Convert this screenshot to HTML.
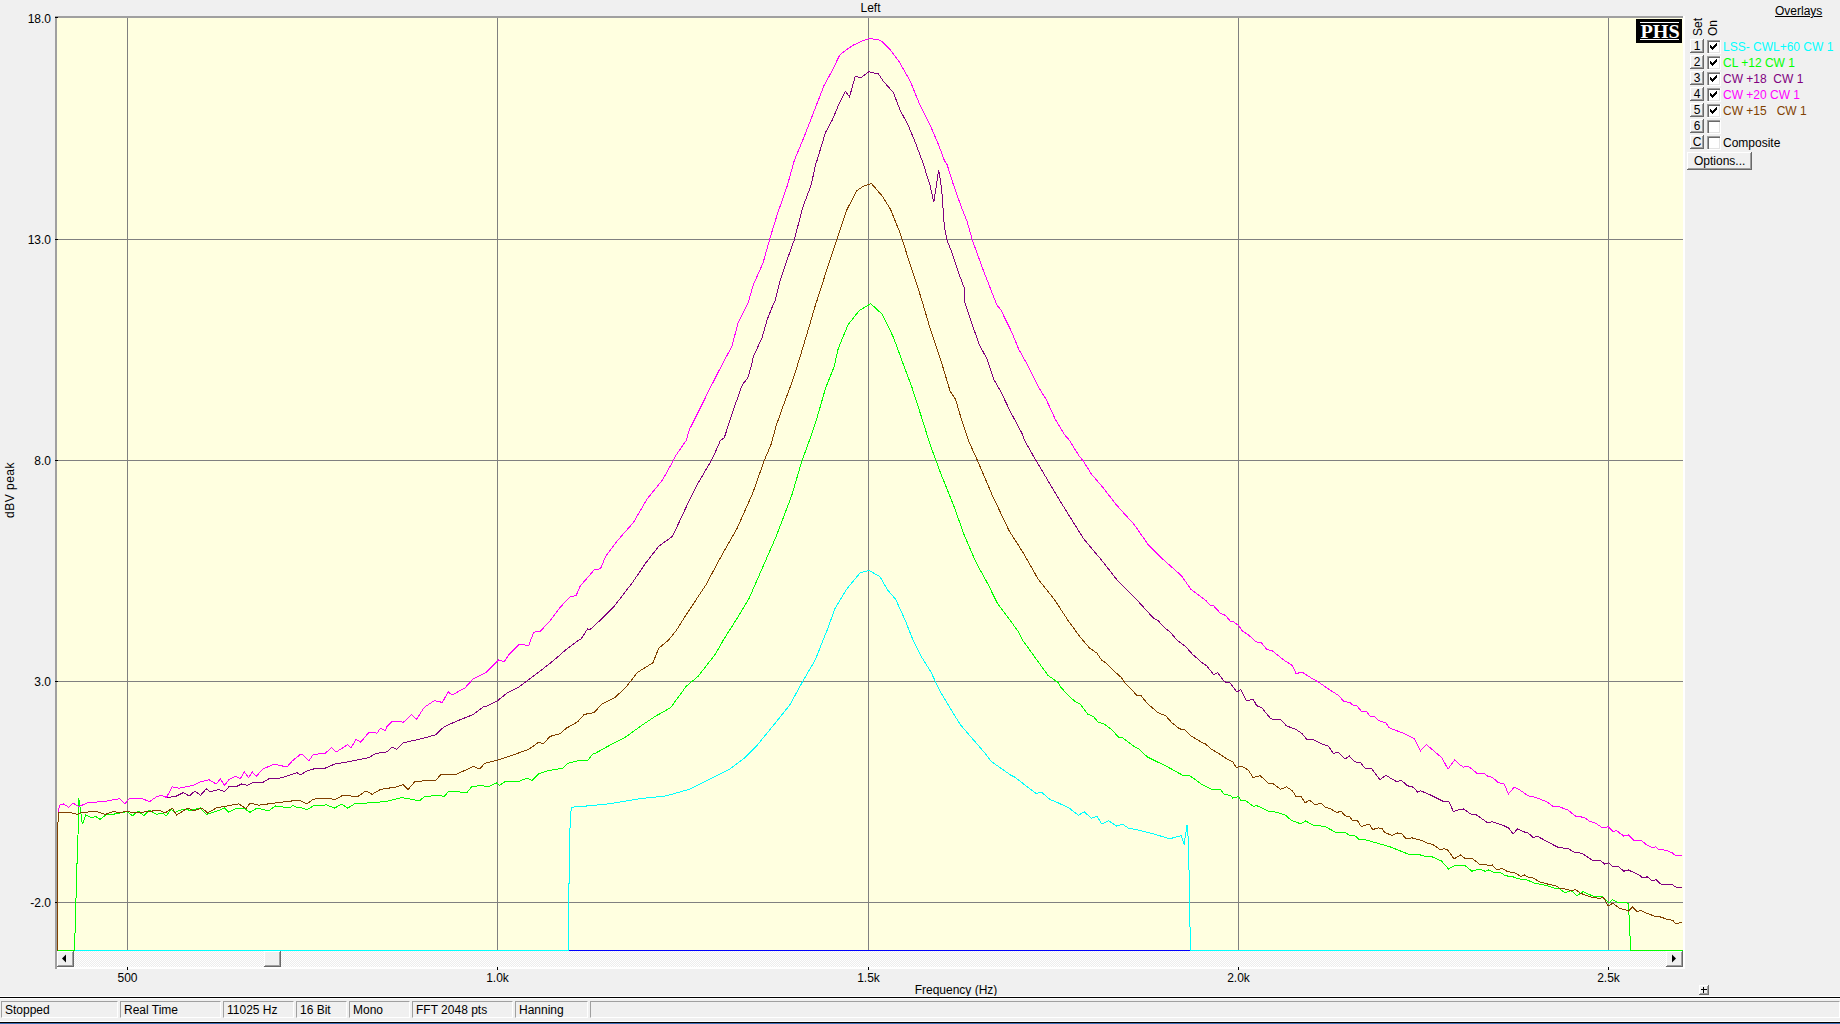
<!DOCTYPE html>
<html><head><meta charset="utf-8"><title>Spectrum</title><style>
html,body{margin:0;padding:0;}
body{width:1840px;height:1024px;background:#F0F0F0;position:relative;overflow:hidden;font-family:"Liberation Sans",sans-serif;font-size:12px;color:#000;}
.t{position:absolute;line-height:14px;white-space:pre;}
.r{position:absolute;}
</style></head><body>
<div class="t" style="left:770.5px;width:200px;top:1px;color:#000;text-align:center;">Left</div>
<div class="t" style="left:-20px;top:483px;width:60px;text-align:center;transform:rotate(-90deg);letter-spacing:0.5px;">dBV peak</div>
<div class="r" style="left:55px;top:16px;width:1630px;height:953px;background:#FFFFFF;"></div>
<div class="r" style="left:55px;top:16px;width:1628px;height:2px;background:#A0A0A0;"></div>
<div class="r" style="left:55px;top:16px;width:2px;height:953px;background:#A0A0A0;"></div>
<div class="r" style="left:57px;top:18px;width:1626px;height:933px;background:#FFFFE0;"></div>
<div class="r" style="left:57px;top:951px;width:1626px;height:16px;background:#F7F7F7;background-image:repeating-conic-gradient(#EDEDED 0 25%,#FFFFFF 0 50%);background-size:2px 2px;"></div>
<div class="r" style="left:57px;top:951px;width:17px;height:16px;background:#696969;"></div><div class="r" style="left:57px;top:951px;width:16px;height:15px;background:#FFFFFF;"></div><div class="r" style="left:58px;top:952px;width:15px;height:14px;background:#A0A0A0;"></div><div class="r" style="left:58px;top:952px;width:14px;height:13px;background:#F0F0F0;"></div>
<svg class="r" style="left:57px;top:951px;" width="17" height="16"><path d="M5 7.5 L9 3.5 L9 11.5 Z" fill="#000"/></svg>
<div class="r" style="left:1666px;top:951px;width:17px;height:16px;background:#696969;"></div><div class="r" style="left:1666px;top:951px;width:16px;height:15px;background:#FFFFFF;"></div><div class="r" style="left:1667px;top:952px;width:15px;height:14px;background:#A0A0A0;"></div><div class="r" style="left:1667px;top:952px;width:14px;height:13px;background:#F0F0F0;"></div>
<svg class="r" style="left:1666px;top:951px;" width="17" height="16"><path d="M10 7.5 L6 3.5 L6 11.5 Z" fill="#000"/></svg>
<div class="r" style="left:264px;top:951px;width:17px;height:16px;background:#696969;"></div><div class="r" style="left:264px;top:951px;width:16px;height:15px;background:#FFFFFF;"></div><div class="r" style="left:265px;top:952px;width:15px;height:14px;background:#A0A0A0;"></div><div class="r" style="left:265px;top:952px;width:14px;height:13px;background:#F0F0F0;"></div>
<svg class="r" style="left:0;top:0;" width="1840" height="1024" shape-rendering="crispEdges">
<rect x="127" y="18" width="1" height="933" fill="#808080"/>
<rect x="127" y="967" width="1" height="3" fill="#000"/>
<rect x="497" y="18" width="1" height="933" fill="#808080"/>
<rect x="497" y="967" width="1" height="3" fill="#000"/>
<rect x="868" y="18" width="1" height="933" fill="#808080"/>
<rect x="868" y="967" width="1" height="3" fill="#000"/>
<rect x="1238" y="18" width="1" height="933" fill="#808080"/>
<rect x="1238" y="967" width="1" height="3" fill="#000"/>
<rect x="1608" y="18" width="1" height="933" fill="#808080"/>
<rect x="1608" y="967" width="1" height="3" fill="#000"/>
<rect x="57" y="239" width="1626" height="1" fill="#808080"/>
<rect x="57" y="460" width="1626" height="1" fill="#808080"/>
<rect x="57" y="681" width="1626" height="1" fill="#808080"/>
<rect x="57" y="902" width="1626" height="1" fill="#808080"/>
<rect x="55" y="17" width="3" height="1" fill="#000"/>
<rect x="55" y="239" width="3" height="1" fill="#000"/>
<rect x="55" y="460" width="3" height="1" fill="#000"/>
<rect x="55" y="681" width="3" height="1" fill="#000"/>
<rect x="55" y="902" width="3" height="1" fill="#000"/>
</svg>
<svg class="r" style="left:0;top:0;" width="1840" height="1024">
<defs><clipPath id="pc"><rect x="57" y="18" width="1626" height="933"/></clipPath></defs>
<g clip-path="url(#pc)" fill="none" stroke-width="1" stroke-linejoin="miter" shape-rendering="crispEdges">
<path d="M57 950.5 L1683 950.5" stroke="#0000FF"/>
<path d="M57.5 950.5 L568.3 950.5 L569.5 837.5 L571.2 807.3 L577.7 806.5 L580.5 806.6 L609.8 803.7 L639.2 798.8 L666.6 795.8 L690.1 789.0 L713.5 777.2 L729.2 769.4 L744.9 757.7 L756.6 745.9 L774.2 724.4 L789.9 704.8 L801.6 683.3 L815.3 659.8 L823.1 640.1 L827.0 630.5 L834.9 608.8 L846.6 589.2 L860.3 572.6 L869.1 570.6 L879.9 576.5 L887.7 590.2 L895.5 599.0 L905.3 620.5 L909.2 630.5 L913.1 640.1 L920.9 655.9 L930.7 671.6 L940.5 692.1 L960.1 724.4 L985.5 753.8 L991.4 761.6 L1010.9 775.2 L1014.8 777.2 L1036.4 793.8 L1038.3 792.9 L1042.2 792.8 L1050.1 799.6 L1057.9 802.7 L1069.6 808.4 L1078.4 815.3 L1084.3 811.8 L1091.2 818.2 L1097.0 816.3 L1101.9 824.1 L1108.8 820.8 L1116.6 826.0 L1122.5 824.1 L1128.3 828.0 L1138.1 830.1 L1155.7 834.5 L1169.4 838.8 L1181.2 835.8 L1184.1 844.6 L1187.0 825.1 L1188.8 844.6 L1189.1 879.8 L1190.0 926.8 L1190.9 950.5 L1683.0 950.5" stroke="#00FFFF"/>
<path d="M57.5 950.5 L74.5 950.5 L77.1 860.5 L78.0 835.5 L78.7 798.1 L80.2 808.0 L82.3 824.3 L85.8 815.1 L91.5 817.9 L95.7 816.5 L100.0 819.4 L105.6 815.1 L117.0 813.7 L126.9 811.6 L132.5 815.8 L138.2 810.9 L143.9 815.8 L149.5 810.2 L156.6 814.4 L162.3 813.0 L166.5 815.8 L170.8 809.4 L175.0 812.3 L182.1 809.4 L190.6 810.2 L200.5 808.0 L206.2 814.4 L217.5 810.9 L224.6 808.0 L228.8 812.3 L235.9 808.7 L244.4 808.7 L250.1 812.3 L257.2 808.0 L268.5 810.9 L275.6 805.9 L289.7 808.0 L292.6 805.2 L296.8 807.3 L300.5 807.3 L307.0 809.7 L313.5 805.7 L326.6 804.9 L334.7 808.1 L341.3 804.0 L347.8 808.1 L354.3 804.0 L385.3 801.6 L401.6 797.5 L419.5 800.8 L424.4 796.7 L439.1 795.1 L444.0 796.7 L448.9 791.0 L466.8 792.6 L471.7 786.9 L481.5 785.3 L488.0 786.9 L496.2 782.8 L499.4 785.3 L505.9 781.2 L517.4 782.0 L527.1 778.0 L532.0 780.4 L538.6 773.9 L548.3 770.6 L563.0 768.2 L567.9 763.3 L577.7 760.8 L587.4 760.8 L592.4 754.3 L596.2 752.8 L613.8 743.0 L625.5 737.1 L643.1 724.4 L654.8 716.6 L670.5 707.8 L686.2 686.3 L697.9 676.5 L715.5 654.0 L723.3 640.1 L737.0 618.5 L748.8 599.0 L762.5 567.7 L776.2 536.4 L791.8 495.3 L801.6 462.0 L807.8 444.9 L809.4 440.5 L817.0 418.0 L825.5 388.3 L834.0 367.1 L838.2 348.6 L848.1 324.6 L859.4 310.4 L870.8 303.6 L876.4 309.0 L882.1 314.0 L893.4 337.3 L903.3 364.2 L911.8 386.9 L921.8 418.0 L930.2 444.9 L940.5 472.8 L954.2 507.0 L964.0 534.4 L975.7 561.8 L987.5 583.3 L997.2 602.9 L1018.8 632.2 L1022.7 640.3 L1048.1 675.5 L1057.9 682.3 L1060.5 686.8 L1066.6 693.6 L1071.2 698.2 L1075.7 702.0 L1080.3 704.3 L1087.9 714.2 L1093.3 716.5 L1098.6 722.6 L1103.2 723.3 L1112.3 730.2 L1118.4 737.0 L1123.0 738.1 L1133.6 746.2 L1138.2 748.5 L1147.3 756.9 L1158.0 762.2 L1168.7 767.5 L1182.4 775.1 L1190.0 775.9 L1196.5 780.5 L1200.5 783.6 L1212.5 789.8 L1220.8 789.8 L1224.4 794.6 L1230.4 795.2 L1232.8 798.2 L1238.8 796.4 L1241.2 800.8 L1245.9 800.8 L1253.1 806.3 L1256.7 805.6 L1268.6 811.1 L1277.0 812.3 L1285.4 815.2 L1291.4 820.3 L1300.9 823.9 L1305.7 820.9 L1312.9 825.1 L1318.9 825.5 L1326.0 827.1 L1336.8 832.9 L1345.2 832.3 L1348.8 835.0 L1354.7 835.5 L1359.5 839.8 L1365.5 839.8 L1390.5 847.0 L1407.9 854.0 L1420.5 855.0 L1426.5 856.6 L1432.5 857.0 L1441.4 861.0 L1448.6 869.0 L1455.2 865.2 L1464.7 865.2 L1471.9 871.2 L1479.1 869.0 L1485.1 871.2 L1488.6 870.0 L1494.6 872.9 L1500.0 872.1 L1505.4 875.9 L1511.4 876.2 L1518.5 878.9 L1526.9 879.8 L1534.1 883.1 L1546.0 885.3 L1554.4 888.1 L1559.2 888.5 L1565.2 892.9 L1571.1 890.5 L1577.1 895.7 L1583.1 891.7 L1592.7 896.0 L1602.2 896.9 L1608.8 902.8 L1612.4 899.8 L1617.8 902.2 L1626.1 902.2 L1628.5 904.0 L1630.7 950.5 L1683.0 950.5" stroke="#00FF00"/>
<path d="M58.9 812.3 L59.1 805.2 L63.2 803.8 L68.8 807.3 L73.1 803.1 L78.7 806.6 L88.7 802.4 L104.2 801.7 L114.1 799.5 L119.8 798.8 L124.8 803.8 L129.7 798.1 L142.5 798.8 L149.5 801.7 L156.6 796.7 L160.9 795.3 L166.5 797.4 L175.0 796.7 L183.5 792.5 L189.2 796.0 L194.9 791.0 L200.5 795.3 L206.2 788.9 L210.4 791.7 L218.9 789.6 L224.6 791.7 L228.8 786.8 L235.9 786.8 L241.6 784.0 L247.2 785.4 L252.9 782.5 L262.8 782.5 L268.5 779.0 L278.4 778.3 L286.9 776.2 L296.8 772.6 L300.5 774.7 L306.7 771.2 L313.5 769.0 L325.0 768.2 L334.7 764.1 L349.4 761.6 L369.0 757.6 L375.5 753.5 L386.9 751.9 L391.8 747.0 L396.7 749.4 L403.2 742.9 L424.4 738.0 L435.8 734.7 L444.0 726.8 L457.0 721.0 L473.3 714.5 L483.1 707.0 L486.4 706.4 L498.2 700.2 L507.6 692.6 L519.0 686.9 L528.8 679.5 L538.6 672.2 L553.2 660.8 L566.3 649.4 L579.3 639.6 L580.5 639.8 L587.5 629.0 L590.3 629.3 L600.5 620.0 L613.8 606.8 L633.3 581.4 L645.1 563.8 L658.8 546.2 L672.5 536.4 L686.2 507.0 L697.9 483.5 L711.6 460.1 L713.6 455.9 L720.4 440.5 L724.3 437.6 L734.9 405.6 L740.5 389.7 L742.5 384.3 L747.6 378.4 L751.7 364.5 L753.2 357.1 L760.5 340.9 L761.7 338.7 L767.4 318.9 L773.1 304.9 L775.2 300.5 L780.1 280.9 L787.2 259.6 L794.3 239.8 L802.8 207.2 L811.3 184.6 L815.5 164.9 L817.0 160.5 L825.5 132.4 L832.5 119.6 L839.6 102.6 L845.3 91.3 L849.5 97.0 L855.2 76.4 L860.9 77.8 L868.7 71.8 L878.5 74.0 L883.5 81.4 L893.4 92.7 L900.5 111.1 L907.6 123.9 L914.7 140.9 L922.9 162.7 L930.2 186.0 L933.8 202.3 L938.7 169.7 L941.6 188.8 L944.4 227.1 L947.2 241.2 L951.5 251.1 L960.0 276.6 L964.2 287.9 L964.2 300.5 L965.7 304.9 L972.7 326.0 L979.8 345.8 L986.9 358.6 L994.0 379.8 L1000.5 391.1 L1011.2 413.2 L1022.6 434.6 L1024.6 440.5 L1033.3 455.9 L1036.4 461.0 L1052.0 487.5 L1063.8 507.0 L1083.3 538.3 L1102.9 561.8 L1116.6 579.4 L1134.2 597.0 L1153.8 618.5 L1158.0 620.5 L1164.1 627.4 L1170.2 631.9 L1176.3 639.5 L1185.4 646.4 L1193.0 654.8 L1198.5 659.5 L1200.5 661.5 L1206.5 665.7 L1213.7 674.6 L1217.8 672.8 L1224.4 681.8 L1229.8 682.8 L1237.0 692.0 L1240.6 689.6 L1246.5 700.9 L1253.1 699.1 L1256.7 705.7 L1261.5 707.5 L1271.0 718.9 L1280.6 719.8 L1286.6 725.9 L1296.1 729.5 L1302.1 733.7 L1306.9 739.6 L1314.1 739.9 L1321.3 743.8 L1328.4 746.2 L1333.2 753.4 L1338.0 752.2 L1345.2 759.0 L1349.4 756.1 L1354.7 761.7 L1360.7 762.9 L1365.5 768.9 L1371.5 768.3 L1379.8 779.7 L1385.8 775.3 L1396.6 781.7 L1401.4 780.3 L1407.3 785.7 L1413.3 787.2 L1417.5 792.0 L1420.5 790.7 L1430.1 794.8 L1436.0 797.8 L1444.4 802.0 L1448.6 801.1 L1453.4 811.6 L1458.8 809.8 L1463.5 809.0 L1470.7 814.0 L1475.5 814.2 L1487.5 822.6 L1492.2 821.7 L1504.2 825.9 L1509.0 828.3 L1513.2 834.1 L1517.3 828.9 L1523.3 831.7 L1528.1 832.9 L1533.5 837.9 L1537.1 836.1 L1553.2 844.8 L1558.0 847.2 L1568.8 849.0 L1574.7 852.6 L1581.9 853.2 L1592.7 860.4 L1599.8 860.2 L1604.6 864.0 L1608.8 862.8 L1613.0 867.0 L1617.8 866.1 L1623.8 871.2 L1628.5 870.0 L1635.7 873.5 L1640.5 875.9 L1642.0 877.6 L1647.3 876.9 L1652.2 880.8 L1655.9 879.6 L1661.8 884.9 L1673.1 884.9 L1675.3 886.9 L1681.7 887.9" stroke="#800080"/>
<path d="M58.9 812.3 L59.1 805.2 L63.2 803.8 L68.8 807.3 L73.1 803.1 L78.7 806.6 L88.7 802.4 L104.2 801.7 L114.1 799.5 L119.8 798.8 L124.8 803.8 L129.7 798.1 L142.5 798.8 L149.5 801.7 L156.6 796.7 L160.9 795.3 L166.5 797.4 L172.2 786.8 L179.3 788.2 L193.4 785.4 L200.5 781.8 L209.0 779.7 L216.1 784.0 L220.3 779.0 L224.6 785.4 L228.8 779.7 L235.9 776.2 L240.2 779.0 L244.4 771.9 L248.7 777.6 L252.2 771.9 L256.4 776.2 L262.8 769.1 L274.2 764.1 L286.9 767.0 L292.6 760.6 L300.5 754.3 L302.5 754.2 L308.7 760.8 L313.5 754.3 L325.0 753.5 L331.5 747.8 L336.4 751.9 L347.8 744.5 L351.0 747.8 L355.9 739.6 L360.8 742.1 L369.0 732.3 L377.1 733.1 L380.4 728.2 L385.3 730.7 L386.9 726.8 L391.8 721.7 L401.6 721.9 L403.2 722.5 L411.4 714.6 L416.3 719.5 L424.4 707.2 L434.2 700.7 L442.4 702.4 L448.1 691.8 L452.1 695.0 L465.2 687.7 L473.3 678.7 L486.4 672.2 L498.6 660.0 L504.3 661.6 L509.2 654.3 L519.0 644.5 L528.8 645.3 L533.7 632.2 L540.2 631.4 L550.0 620.8 L559.8 607.8 L569.5 597.2 L576.1 595.6 L580.5 585.3 L582.6 583.3 L594.1 570.0 L600.5 568.7 L605.9 555.9 L617.7 540.3 L633.3 522.7 L647.0 499.2 L662.7 479.6 L672.5 462.0 L675.5 455.9 L686.2 440.5 L689.2 430.0 L698.4 411.7 L709.0 390.4 L718.2 372.1 L731.9 346.2 L738.0 323.4 L740.5 318.2 L748.5 301.6 L753.2 285.1 L763.2 262.5 L769.5 239.8 L777.3 214.3 L787.2 186.0 L792.9 165.5 L794.3 160.5 L804.2 136.6 L814.1 111.1 L824.0 85.6 L832.5 70.1 L839.6 55.2 L845.3 50.5 L853.8 44.9 L863.7 40.3 L869.4 38.6 L877.9 39.6 L882.1 41.7 L890.6 50.2 L899.1 61.6 L910.4 81.4 L918.9 102.6 L930.2 125.3 L938.7 145.1 L944.4 160.5 L947.2 164.9 L952.9 183.2 L961.4 207.2 L967.1 221.4 L972.7 241.2 L984.1 272.4 L996.8 304.9 L1000.5 309.3 L1011.2 331.0 L1018.8 349.3 L1027.2 364.5 L1038.6 387.3 L1046.2 399.5 L1055.3 419.3 L1064.5 434.6 L1069.6 440.5 L1079.0 455.9 L1083.3 461.0 L1091.2 473.8 L1102.9 487.5 L1116.6 505.1 L1134.2 524.6 L1147.9 544.2 L1163.5 559.8 L1181.2 575.5 L1190.9 589.2 L1205.9 600.5 L1210.1 605.3 L1213.7 605.9 L1220.8 613.7 L1225.6 615.4 L1230.4 621.4 L1234.0 622.0 L1238.8 625.6 L1242.3 631.0 L1248.3 634.6 L1255.5 641.7 L1261.5 642.9 L1266.9 649.5 L1272.2 650.7 L1284.2 660.3 L1292.6 665.7 L1296.1 673.7 L1302.1 672.0 L1308.1 676.1 L1318.9 682.4 L1332.0 691.4 L1338.0 695.0 L1344.0 701.5 L1349.9 702.4 L1353.5 705.7 L1357.1 706.0 L1361.3 711.1 L1366.7 711.5 L1369.7 715.9 L1375.1 717.1 L1378.6 720.5 L1385.8 722.9 L1389.4 727.9 L1403.8 733.4 L1414.4 738.5 L1420.5 750.8 L1426.5 744.6 L1436.0 752.8 L1442.0 758.0 L1448.0 769.1 L1454.6 759.9 L1460.0 765.0 L1463.5 767.1 L1468.3 766.2 L1476.7 773.1 L1483.9 773.1 L1488.6 776.9 L1492.2 777.1 L1498.2 782.6 L1504.2 784.1 L1508.4 793.9 L1514.4 787.1 L1520.9 790.7 L1528.1 795.8 L1535.3 797.2 L1547.2 802.0 L1553.2 806.6 L1559.2 806.8 L1567.6 809.8 L1575.9 816.4 L1584.3 817.3 L1589.1 821.1 L1595.1 822.9 L1602.2 827.7 L1608.2 826.9 L1613.0 831.3 L1616.6 830.7 L1623.8 836.1 L1628.5 834.9 L1633.3 840.0 L1640.5 840.5 L1642.0 841.1 L1647.3 845.4 L1652.7 847.9 L1655.9 846.8 L1659.2 850.0 L1662.4 849.7 L1666.7 850.6 L1672.0 852.7 L1675.8 855.9 L1681.7 855.9" stroke="#FF00FF"/>
<path d="M57.5 950.5 L57.5 880.5 L58.1 813.0 L68.8 812.3 L77.3 814.4 L81.6 812.3 L97.1 811.6 L105.6 814.4 L112.7 811.6 L118.4 812.3 L128.3 811.6 L135.4 813.0 L159.5 810.2 L165.1 813.0 L172.2 808.0 L176.5 815.1 L187.8 808.0 L193.4 810.9 L201.9 808.0 L207.6 813.0 L216.1 808.0 L227.4 805.9 L238.8 803.8 L245.8 808.7 L250.1 803.1 L258.6 805.2 L274.2 803.1 L298.2 800.2 L300.5 800.8 L307.0 804.0 L313.5 799.1 L329.8 798.3 L334.7 800.0 L342.9 795.1 L357.6 796.7 L365.7 791.0 L372.2 794.3 L380.4 789.4 L396.7 786.9 L403.2 784.5 L408.1 789.4 L414.6 782.0 L426.0 780.4 L435.8 780.4 L440.7 774.7 L455.4 774.7 L473.3 766.5 L479.9 769.0 L484.7 763.3 L497.8 760.0 L512.5 755.1 L528.8 749.4 L538.6 742.1 L543.5 743.7 L550.0 736.4 L559.8 733.9 L566.3 728.2 L577.7 721.7 L584.2 714.4 L588.3 713.7 L594.0 712.7 L602.0 703.9 L615.7 697.0 L627.5 685.3 L637.2 672.6 L652.9 662.8 L658.8 648.1 L668.5 640.1 L676.4 630.3 L686.2 614.6 L705.7 585.3 L721.4 555.9 L737.0 528.5 L752.7 493.3 L764.4 460.1 L770.9 444.9 L772.2 440.5 L775.9 426.5 L784.4 402.5 L792.9 379.8 L800.0 357.1 L808.5 328.8 L815.5 304.9 L817.0 300.5 L825.5 273.8 L836.8 239.8 L846.7 210.1 L856.6 190.9 L863.7 186.0 L871.5 183.6 L882.1 195.9 L890.6 209.4 L900.5 234.1 L910.4 265.3 L918.9 290.8 L921.8 300.5 L923.2 304.9 L930.2 328.8 L941.6 362.8 L950.1 391.1 L955.7 399.6 L961.4 419.4 L969.4 442.7 L977.7 461.0 L992.3 495.3 L1009.0 530.5 L1022.7 552.0 L1038.3 579.4 L1054.0 599.0 L1068.1 620.5 L1080.3 637.3 L1089.4 647.9 L1097.1 653.3 L1101.6 660.1 L1106.2 663.2 L1113.8 670.8 L1121.4 677.6 L1124.5 682.2 L1136.7 695.1 L1141.2 695.9 L1147.3 703.5 L1158.0 712.7 L1165.6 715.7 L1171.7 722.6 L1179.3 728.7 L1185.4 730.2 L1191.5 736.3 L1198.5 740.4 L1200.5 741.8 L1205.3 743.8 L1211.3 749.0 L1219.6 754.0 L1226.8 758.8 L1232.8 761.7 L1236.4 767.7 L1241.2 765.9 L1248.3 770.1 L1253.1 777.6 L1260.3 775.7 L1268.6 783.6 L1273.4 783.9 L1280.6 789.2 L1286.6 786.9 L1292.6 791.0 L1296.1 796.8 L1300.9 796.1 L1305.1 803.0 L1309.3 800.0 L1315.3 804.8 L1320.7 803.0 L1326.0 807.8 L1329.6 808.1 L1336.8 812.6 L1341.0 811.1 L1345.2 815.9 L1349.9 816.7 L1352.3 820.7 L1357.1 820.0 L1361.3 826.7 L1369.1 823.9 L1372.7 829.5 L1378.6 827.9 L1382.2 828.7 L1384.6 832.3 L1391.8 835.5 L1397.8 832.9 L1401.4 833.5 L1406.1 838.6 L1412.1 837.9 L1418.5 839.8 L1420.5 840.1 L1428.9 843.7 L1432.5 844.2 L1440.2 849.6 L1444.4 848.7 L1448.0 850.2 L1454.0 859.0 L1460.6 855.0 L1465.9 859.0 L1471.9 858.0 L1479.1 864.0 L1485.1 864.2 L1488.6 865.8 L1492.2 864.9 L1497.0 870.0 L1501.8 868.2 L1507.8 871.7 L1515.0 872.9 L1520.9 876.5 L1524.5 875.0 L1529.3 877.7 L1534.1 878.1 L1538.9 881.7 L1550.8 884.9 L1555.6 885.5 L1560.4 888.7 L1566.4 889.1 L1570.0 890.3 L1575.9 889.9 L1580.7 893.3 L1590.3 896.9 L1599.8 898.4 L1603.4 897.5 L1608.2 905.8 L1613.0 903.2 L1620.2 908.8 L1624.9 909.4 L1628.5 911.2 L1632.7 907.0 L1636.9 911.6 L1640.5 910.4 L1646.3 913.0 L1654.9 916.3 L1661.3 917.1 L1667.7 919.8 L1673.1 920.1 L1675.3 923.8 L1681.7 922.5" stroke="#804000"/>
</g></svg>
<div class="t" style="right:1789px;top:12px;color:#000;text-align:right;">18.0</div>
<div class="t" style="right:1789px;top:233px;color:#000;text-align:right;">13.0</div>
<div class="t" style="right:1789px;top:454px;color:#000;text-align:right;">8.0</div>
<div class="t" style="right:1789px;top:675px;color:#000;text-align:right;">3.0</div>
<div class="t" style="right:1789px;top:896px;color:#000;text-align:right;">-2.0</div>
<div class="t" style="left:27.5px;width:200px;top:971px;color:#000;text-align:center;">500</div>
<div class="t" style="left:397.5px;width:200px;top:971px;color:#000;text-align:center;">1.0k</div>
<div class="t" style="left:768.5px;width:200px;top:971px;color:#000;text-align:center;">1.5k</div>
<div class="t" style="left:1138.5px;width:200px;top:971px;color:#000;text-align:center;">2.0k</div>
<div class="t" style="left:1508.5px;width:200px;top:971px;color:#000;text-align:center;">2.5k</div>
<div class="t" style="left:856px;width:200px;top:983px;color:#000;text-align:center;">Frequency (Hz)</div>
<div class="r" style="left:1699px;top:985px;width:10px;height:10px;background:#696969;"></div><div class="r" style="left:1699px;top:985px;width:9px;height:9px;background:#FFFFFF;"></div><div class="r" style="left:1700px;top:986px;width:8px;height:8px;background:#A0A0A0;"></div><div class="r" style="left:1700px;top:986px;width:7px;height:7px;background:#F0F0F0;"></div>
<div class="r" style="left:1701px;top:989px;width:6px;height:1px;background:#000;"></div><div class="r" style="left:1703px;top:987px;width:1px;height:6px;background:#000;"></div>
<div class="r" style="left:0;top:996px;width:1840px;height:1px;background:#FFFFFF;"></div>
<div class="r" style="left:0;top:997px;width:1840px;height:1px;background:#000;"></div>
<div class="r" style="left:0;top:998px;width:1840px;height:1px;background:#FFFFFF;"></div>
<div class="r" style="left:0;top:1021px;width:1840px;height:1px;background:#FFFFFF;"></div>
<div class="r" style="left:0;top:1022px;width:1840px;height:1px;background:#000;"></div>
<div class="r" style="left:0;top:1023px;width:1840px;height:1px;background:#3C6EB4;"></div>
<div class="r" style="left:1px;top:1001px;width:117px;height:17px;border-left:1px solid #A0A0A0;border-top:1px solid #A0A0A0;border-right:1px solid #FFFFFF;border-bottom:1px solid #FFFFFF;box-sizing:border-box;"></div>
<div class="t" style="left:5px;top:1003px;color:#000;">Stopped</div>
<div class="r" style="left:120px;top:1001px;width:101px;height:17px;border-left:1px solid #A0A0A0;border-top:1px solid #A0A0A0;border-right:1px solid #FFFFFF;border-bottom:1px solid #FFFFFF;box-sizing:border-box;"></div>
<div class="t" style="left:124px;top:1003px;color:#000;">Real Time</div>
<div class="r" style="left:223px;top:1001px;width:71px;height:17px;border-left:1px solid #A0A0A0;border-top:1px solid #A0A0A0;border-right:1px solid #FFFFFF;border-bottom:1px solid #FFFFFF;box-sizing:border-box;"></div>
<div class="t" style="left:227px;top:1003px;color:#000;">11025 Hz</div>
<div class="r" style="left:296px;top:1001px;width:51px;height:17px;border-left:1px solid #A0A0A0;border-top:1px solid #A0A0A0;border-right:1px solid #FFFFFF;border-bottom:1px solid #FFFFFF;box-sizing:border-box;"></div>
<div class="t" style="left:300px;top:1003px;color:#000;">16 Bit</div>
<div class="r" style="left:349px;top:1001px;width:61px;height:17px;border-left:1px solid #A0A0A0;border-top:1px solid #A0A0A0;border-right:1px solid #FFFFFF;border-bottom:1px solid #FFFFFF;box-sizing:border-box;"></div>
<div class="t" style="left:353px;top:1003px;color:#000;">Mono</div>
<div class="r" style="left:412px;top:1001px;width:101px;height:17px;border-left:1px solid #A0A0A0;border-top:1px solid #A0A0A0;border-right:1px solid #FFFFFF;border-bottom:1px solid #FFFFFF;box-sizing:border-box;"></div>
<div class="t" style="left:416px;top:1003px;color:#000;">FFT 2048 pts</div>
<div class="r" style="left:515px;top:1001px;width:73px;height:17px;border-left:1px solid #A0A0A0;border-top:1px solid #A0A0A0;border-right:1px solid #FFFFFF;border-bottom:1px solid #FFFFFF;box-sizing:border-box;"></div>
<div class="t" style="left:519px;top:1003px;color:#000;">Hanning</div>
<div class="r" style="left:590px;top:1001px;width:1250px;height:17px;border-left:1px solid #A0A0A0;border-top:1px solid #A0A0A0;border-right:1px solid #FFFFFF;border-bottom:1px solid #FFFFFF;box-sizing:border-box;"></div>
<div class="r" style="left:1636px;top:19px;width:46px;height:24px;background:#000;"></div>
<div class="r" style="left:1640px;top:22px;width:39px;height:1px;background:#FFF;"></div>
<div class="r" style="left:1640px;top:39px;width:39px;height:1px;background:#FFF;"></div>
<div class="t" style="left:1637px;top:23px;width:46px;text-align:center;color:#FFF;font-family:'Liberation Serif',serif;font-weight:bold;font-size:18px;line-height:18px;transform:scaleX(1.12);transform-origin:23px 0;">PHS</div>
<div class="t" style="left:1775px;top:4px;color:#000;text-decoration:underline;">Overlays</div>
<div class="t" style="left:1691px;top:36px;width:40px;transform:rotate(-90deg);transform-origin:0 0;">Set</div>
<div class="t" style="left:1706px;top:36px;width:40px;transform:rotate(-90deg);transform-origin:0 0;">On</div>
<div class="r" style="left:1690px;top:39px;width:14px;height:14px;background:#696969;"></div><div class="r" style="left:1690px;top:39px;width:13px;height:13px;background:#FFFFFF;"></div><div class="r" style="left:1691px;top:40px;width:12px;height:12px;background:#A0A0A0;"></div><div class="r" style="left:1691px;top:40px;width:11px;height:11px;background:#F0F0F0;"></div>
<div class="t" style="left:1597px;width:200px;top:39px;color:#000;text-align:center;">1</div>
<div class="r" style="left:1707px;top:40px;width:14px;height:14px;background:#FFF;"></div>
<div class="r" style="left:1707px;top:40px;width:13px;height:13px;background:#A0A0A0;"></div>
<div class="r" style="left:1708px;top:41px;width:12px;height:12px;background:#696969;"></div>
<div class="r" style="left:1709px;top:42px;width:11px;height:11px;background:#E3E3E3;"></div>
<div class="r" style="left:1709px;top:42px;width:10px;height:10px;background:#FFF;"></div>
<svg class="r" style="left:1710px;top:43px;" width="7" height="7" shape-rendering="crispEdges"><path d="M6 0h1v3h-1zM5 1h1v3h-1zM4 2h1v3h-1zM0 2h1v3h-1zM1 3h1v3h-1zM2 4h1v3h-1zM3 3h1v3h-1z" fill="#000"/></svg>
<div class="t" style="left:1723px;top:40px;color:#00FFFF;">LSS- CWL+60 CW 1</div>
<div class="r" style="left:1690px;top:55px;width:14px;height:14px;background:#696969;"></div><div class="r" style="left:1690px;top:55px;width:13px;height:13px;background:#FFFFFF;"></div><div class="r" style="left:1691px;top:56px;width:12px;height:12px;background:#A0A0A0;"></div><div class="r" style="left:1691px;top:56px;width:11px;height:11px;background:#F0F0F0;"></div>
<div class="t" style="left:1597px;width:200px;top:55px;color:#000;text-align:center;">2</div>
<div class="r" style="left:1707px;top:56px;width:14px;height:14px;background:#FFF;"></div>
<div class="r" style="left:1707px;top:56px;width:13px;height:13px;background:#A0A0A0;"></div>
<div class="r" style="left:1708px;top:57px;width:12px;height:12px;background:#696969;"></div>
<div class="r" style="left:1709px;top:58px;width:11px;height:11px;background:#E3E3E3;"></div>
<div class="r" style="left:1709px;top:58px;width:10px;height:10px;background:#FFF;"></div>
<svg class="r" style="left:1710px;top:59px;" width="7" height="7" shape-rendering="crispEdges"><path d="M6 0h1v3h-1zM5 1h1v3h-1zM4 2h1v3h-1zM0 2h1v3h-1zM1 3h1v3h-1zM2 4h1v3h-1zM3 3h1v3h-1z" fill="#000"/></svg>
<div class="t" style="left:1723px;top:56px;color:#00FF00;">CL +12 CW 1</div>
<div class="r" style="left:1690px;top:71px;width:14px;height:14px;background:#696969;"></div><div class="r" style="left:1690px;top:71px;width:13px;height:13px;background:#FFFFFF;"></div><div class="r" style="left:1691px;top:72px;width:12px;height:12px;background:#A0A0A0;"></div><div class="r" style="left:1691px;top:72px;width:11px;height:11px;background:#F0F0F0;"></div>
<div class="t" style="left:1597px;width:200px;top:71px;color:#000;text-align:center;">3</div>
<div class="r" style="left:1707px;top:72px;width:14px;height:14px;background:#FFF;"></div>
<div class="r" style="left:1707px;top:72px;width:13px;height:13px;background:#A0A0A0;"></div>
<div class="r" style="left:1708px;top:73px;width:12px;height:12px;background:#696969;"></div>
<div class="r" style="left:1709px;top:74px;width:11px;height:11px;background:#E3E3E3;"></div>
<div class="r" style="left:1709px;top:74px;width:10px;height:10px;background:#FFF;"></div>
<svg class="r" style="left:1710px;top:75px;" width="7" height="7" shape-rendering="crispEdges"><path d="M6 0h1v3h-1zM5 1h1v3h-1zM4 2h1v3h-1zM0 2h1v3h-1zM1 3h1v3h-1zM2 4h1v3h-1zM3 3h1v3h-1z" fill="#000"/></svg>
<div class="t" style="left:1723px;top:72px;color:#800080;">CW +18  CW 1</div>
<div class="r" style="left:1690px;top:87px;width:14px;height:14px;background:#696969;"></div><div class="r" style="left:1690px;top:87px;width:13px;height:13px;background:#FFFFFF;"></div><div class="r" style="left:1691px;top:88px;width:12px;height:12px;background:#A0A0A0;"></div><div class="r" style="left:1691px;top:88px;width:11px;height:11px;background:#F0F0F0;"></div>
<div class="t" style="left:1597px;width:200px;top:87px;color:#000;text-align:center;">4</div>
<div class="r" style="left:1707px;top:88px;width:14px;height:14px;background:#FFF;"></div>
<div class="r" style="left:1707px;top:88px;width:13px;height:13px;background:#A0A0A0;"></div>
<div class="r" style="left:1708px;top:89px;width:12px;height:12px;background:#696969;"></div>
<div class="r" style="left:1709px;top:90px;width:11px;height:11px;background:#E3E3E3;"></div>
<div class="r" style="left:1709px;top:90px;width:10px;height:10px;background:#FFF;"></div>
<svg class="r" style="left:1710px;top:91px;" width="7" height="7" shape-rendering="crispEdges"><path d="M6 0h1v3h-1zM5 1h1v3h-1zM4 2h1v3h-1zM0 2h1v3h-1zM1 3h1v3h-1zM2 4h1v3h-1zM3 3h1v3h-1z" fill="#000"/></svg>
<div class="t" style="left:1723px;top:88px;color:#FF00FF;">CW +20 CW 1</div>
<div class="r" style="left:1690px;top:103px;width:14px;height:14px;background:#696969;"></div><div class="r" style="left:1690px;top:103px;width:13px;height:13px;background:#FFFFFF;"></div><div class="r" style="left:1691px;top:104px;width:12px;height:12px;background:#A0A0A0;"></div><div class="r" style="left:1691px;top:104px;width:11px;height:11px;background:#F0F0F0;"></div>
<div class="t" style="left:1597px;width:200px;top:103px;color:#000;text-align:center;">5</div>
<div class="r" style="left:1707px;top:104px;width:14px;height:14px;background:#FFF;"></div>
<div class="r" style="left:1707px;top:104px;width:13px;height:13px;background:#A0A0A0;"></div>
<div class="r" style="left:1708px;top:105px;width:12px;height:12px;background:#696969;"></div>
<div class="r" style="left:1709px;top:106px;width:11px;height:11px;background:#E3E3E3;"></div>
<div class="r" style="left:1709px;top:106px;width:10px;height:10px;background:#FFF;"></div>
<svg class="r" style="left:1710px;top:107px;" width="7" height="7" shape-rendering="crispEdges"><path d="M6 0h1v3h-1zM5 1h1v3h-1zM4 2h1v3h-1zM0 2h1v3h-1zM1 3h1v3h-1zM2 4h1v3h-1zM3 3h1v3h-1z" fill="#000"/></svg>
<div class="t" style="left:1723px;top:104px;color:#804000;">CW +15   CW 1</div>
<div class="r" style="left:1690px;top:119px;width:14px;height:14px;background:#696969;"></div><div class="r" style="left:1690px;top:119px;width:13px;height:13px;background:#FFFFFF;"></div><div class="r" style="left:1691px;top:120px;width:12px;height:12px;background:#A0A0A0;"></div><div class="r" style="left:1691px;top:120px;width:11px;height:11px;background:#F0F0F0;"></div>
<div class="t" style="left:1597px;width:200px;top:119px;color:#000;text-align:center;">6</div>
<div class="r" style="left:1707px;top:120px;width:14px;height:14px;background:#FFF;"></div>
<div class="r" style="left:1707px;top:120px;width:13px;height:13px;background:#A0A0A0;"></div>
<div class="r" style="left:1708px;top:121px;width:12px;height:12px;background:#696969;"></div>
<div class="r" style="left:1709px;top:122px;width:11px;height:11px;background:#E3E3E3;"></div>
<div class="r" style="left:1709px;top:122px;width:10px;height:10px;background:#FFF;"></div>
<div class="r" style="left:1690px;top:135px;width:14px;height:14px;background:#696969;"></div><div class="r" style="left:1690px;top:135px;width:13px;height:13px;background:#FFFFFF;"></div><div class="r" style="left:1691px;top:136px;width:12px;height:12px;background:#A0A0A0;"></div><div class="r" style="left:1691px;top:136px;width:11px;height:11px;background:#F0F0F0;"></div>
<div class="t" style="left:1597px;width:200px;top:135px;color:#000;text-align:center;">C</div>
<div class="r" style="left:1707px;top:136px;width:14px;height:14px;background:#FFF;"></div>
<div class="r" style="left:1707px;top:136px;width:13px;height:13px;background:#A0A0A0;"></div>
<div class="r" style="left:1708px;top:137px;width:12px;height:12px;background:#696969;"></div>
<div class="r" style="left:1709px;top:138px;width:11px;height:11px;background:#E3E3E3;"></div>
<div class="r" style="left:1709px;top:138px;width:10px;height:10px;background:#FFF;"></div>
<div class="t" style="left:1723px;top:136px;color:#000;">Composite</div>
<div class="r" style="left:1687px;top:152px;width:65px;height:18px;background:#696969;"></div><div class="r" style="left:1687px;top:152px;width:64px;height:17px;background:#FFFFFF;"></div><div class="r" style="left:1688px;top:153px;width:63px;height:16px;background:#A0A0A0;"></div><div class="r" style="left:1688px;top:153px;width:62px;height:15px;background:#F0F0F0;"></div>
<div class="t" style="left:1694px;top:154px;color:#000;">Options...</div>
</body></html>
